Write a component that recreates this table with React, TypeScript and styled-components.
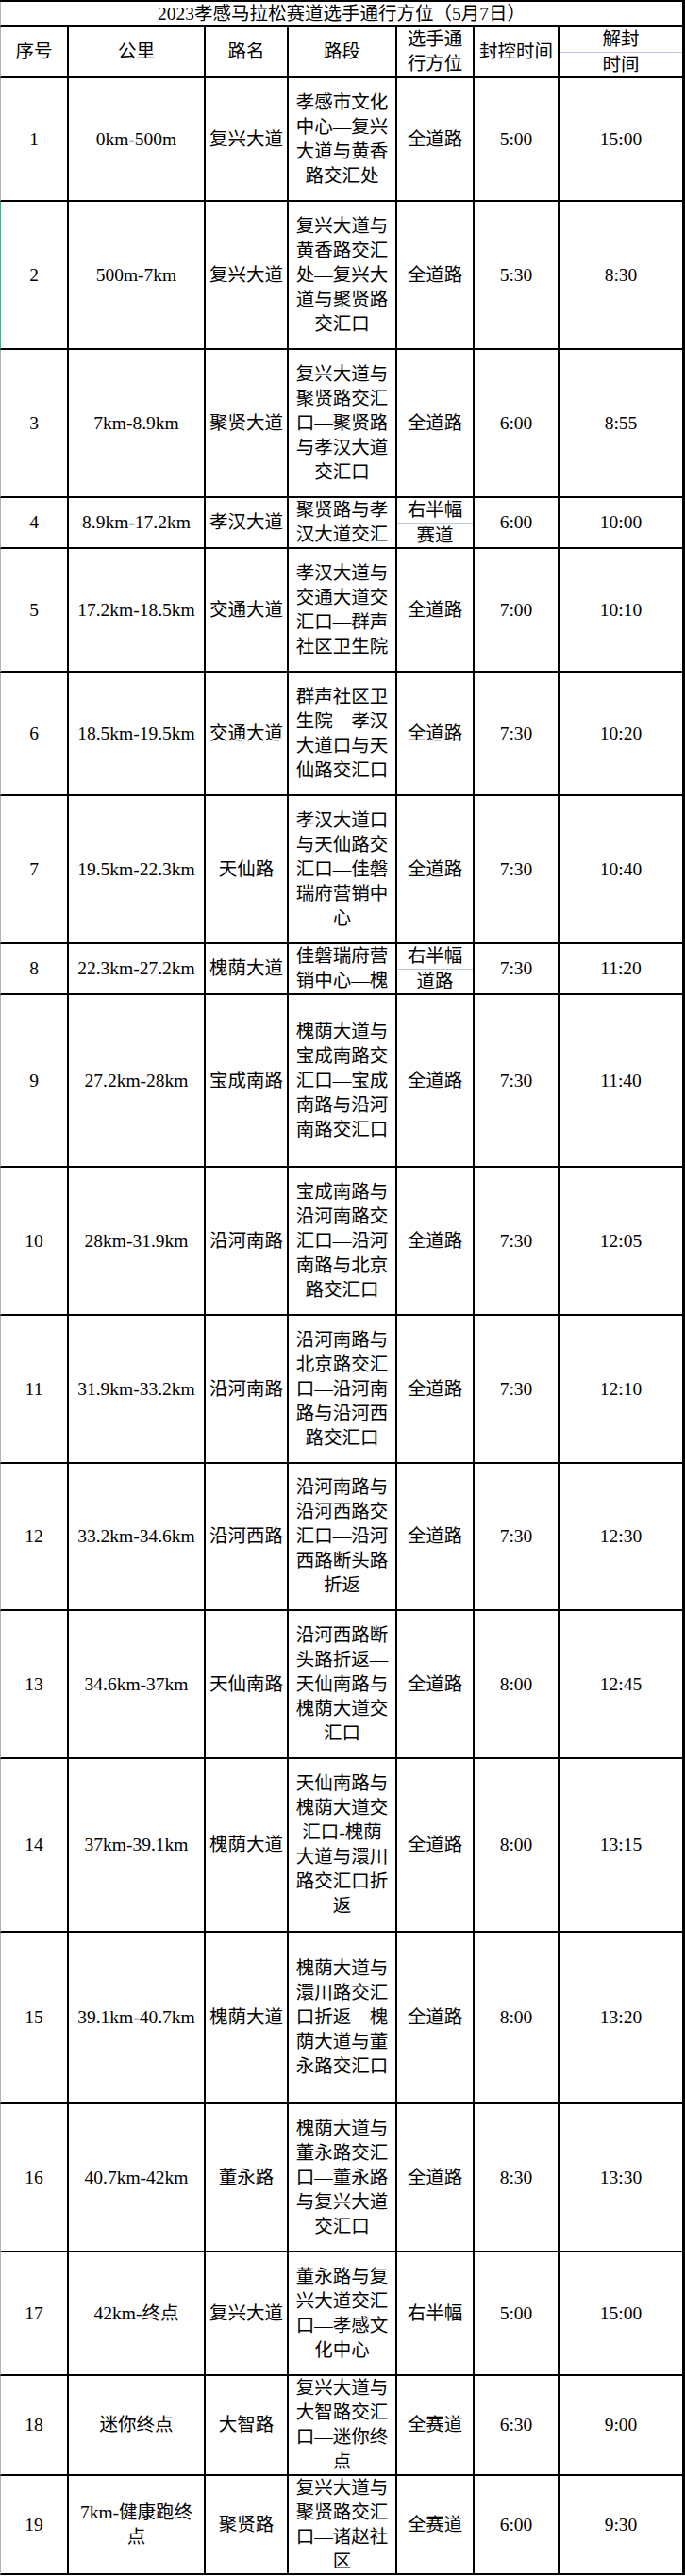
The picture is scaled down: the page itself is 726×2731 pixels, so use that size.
import React from "react";
import styled, { createGlobalStyle } from "styled-components";

type Text = string | string[];

interface IStage {
  no: number,
  km: Text,
  road: string,
  section: string[],
  lane: Text,
  close: string,
  open: string,
  height: number,
  split?: boolean,
  green?: boolean,
}

const stages: IStage[] = [
  { no: 1, km: "0km-500m", road: "复兴大道", section: ["孝感市文化", "中心—复兴", "大道与黄香", "路交汇处"], lane: "全道路", close: "5:00", open: "15:00", height: 131 },
  { no: 2, km: "500m-7km", road: "复兴大道", section: ["复兴大道与", "黄香路交汇", "处—复兴大", "道与聚贤路", "交汇口"], lane: "全道路", close: "5:30", open: "8:30", height: 157, green: true },
  { no: 3, km: "7km-8.9km", road: "聚贤大道", section: ["复兴大道与", "聚贤路交汇", "口—聚贤路", "与孝汉大道", "交汇口"], lane: "全道路", close: "6:00", open: "8:55", height: 157 },
  { no: 4, km: "8.9km-17.2km", road: "孝汉大道", section: ["聚贤路与孝", "汉大道交汇"], lane: ["右半幅", "赛道"], split: true, close: "6:00", open: "10:00", height: 54 },
  { no: 5, km: "17.2km-18.5km", road: "交通大道", section: ["孝汉大道与", "交通大道交", "汇口—群声", "社区卫生院"], lane: "全道路", close: "7:00", open: "10:10", height: 131 },
  { no: 6, km: "18.5km-19.5km", road: "交通大道", section: ["群声社区卫", "生院—孝汉", "大道口与天", "仙路交汇口"], lane: "全道路", close: "7:30", open: "10:20", height: 131 },
  { no: 7, km: "19.5km-22.3km", road: "天仙路", section: ["孝汉大道口", "与天仙路交", "汇口—佳磐", "瑞府营销中", "心"], lane: "全道路", close: "7:30", open: "10:40", height: 157 },
  { no: 8, km: "22.3km-27.2km", road: "槐荫大道", section: ["佳磐瑞府营", "销中心—槐"], lane: ["右半幅", "道路"], split: true, close: "7:30", open: "11:20", height: 54 },
  { no: 9, km: "27.2km-28km", road: "宝成南路", section: ["槐荫大道与", "宝成南路交", "汇口—宝成", "南路与沿河", "南路交汇口"], lane: "全道路", close: "7:30", open: "11:40", height: 183 },
  { no: 10, km: "28km-31.9km", road: "沿河南路", section: ["宝成南路与", "沿河南路交", "汇口—沿河", "南路与北京", "路交汇口"], lane: "全道路", close: "7:30", open: "12:05", height: 157 },
  { no: 11, km: "31.9km-33.2km", road: "沿河南路", section: ["沿河南路与", "北京路交汇", "口—沿河南", "路与沿河西", "路交汇口"], lane: "全道路", close: "7:30", open: "12:10", height: 157 },
  { no: 12, km: "33.2km-34.6km", road: "沿河西路", section: ["沿河南路与", "沿河西路交", "汇口—沿河", "西路断头路", "折返"], lane: "全道路", close: "7:30", open: "12:30", height: 156 },
  { no: 13, km: "34.6km-37km", road: "天仙南路", section: ["沿河西路断", "头路折返—", "天仙南路与", "槐荫大道交", "汇口"], lane: "全道路", close: "8:00", open: "12:45", height: 157 },
  { no: 14, km: "37km-39.1km", road: "槐荫大道", section: ["天仙南路与", "槐荫大道交", "汇口-槐荫", "大道与澴川", "路交汇口折", "返"], lane: "全道路", close: "8:00", open: "13:15", height: 184 },
  { no: 15, km: "39.1km-40.7km", road: "槐荫大道", section: ["槐荫大道与", "澴川路交汇", "口折返—槐", "荫大道与董", "永路交汇口"], lane: "全道路", close: "8:00", open: "13:20", height: 182 },
  { no: 16, km: "40.7km-42km", road: "董永路", section: ["槐荫大道与", "董永路交汇", "口—董永路", "与复兴大道", "交汇口"], lane: "全道路", close: "8:30", open: "13:30", height: 157 },
  { no: 17, km: "42km-终点", road: "复兴大道", section: ["董永路与复", "兴大道交汇", "口—孝感文", "化中心"], lane: "右半幅", close: "5:00", open: "15:00", height: 131 },
  { no: 18, km: "迷你终点", road: "大智路", section: ["复兴大道与", "大智路交汇", "口—迷你终", "点"], lane: "全赛道", close: "6:30", open: "9:00", height: 106 },
  { no: 19, km: ["7km-健康跑终", "点"], road: "聚贤路", section: ["复兴大道与", "聚贤路交汇", "口—诸赵社", "区"], lane: "全赛道", close: "6:00", open: "9:30", height: 105 },
];

const lines = (text: Text) =>
  (Array.isArray(text) ? text : [text]).map((line, i) => <Line key={i}>{line}</Line>);

const App: React.FC = () => {
  return (
    <>
      <GlobalStyle />
      <Sheet>
        <Title>2023孝感马拉松赛道选手通行方位（5月7日）</Title>
        <Row $h={54}>
          <Cell>{lines("序号")}</Cell>
          <Cell>{lines("公里")}</Cell>
          <Cell>{lines("路名")}</Cell>
          <Cell>{lines("路段")}</Cell>
          <Cell>{lines(["选手通", "行方位"])}</Cell>
          <Cell>{lines("封控时间")}</Cell>
          <Cell>
            <Half $divider>解封</Half>
            <Half>时间</Half>
          </Cell>
        </Row>
        {stages.map((s) => (
          <Row key={s.no} $h={s.height} $green={s.green}>
            <Cell>{lines(String(s.no))}</Cell>
            <Cell>{lines(s.km)}</Cell>
            <Cell>{lines(s.road)}</Cell>
            <Cell>{lines(s.section)}</Cell>
            {s.split && Array.isArray(s.lane) ? (
              <Cell>
                <Half $divider>{s.lane[0]}</Half>
                <Half>{s.lane[1]}</Half>
              </Cell>
            ) : (
              <Cell>{lines(s.lane)}</Cell>
            )}
            <Cell>{lines(s.close)}</Cell>
            <Cell>{lines(s.open)}</Cell>
          </Row>
        ))}
      </Sheet>
    </>
  );
};

export default App;

const GlobalStyle = createGlobalStyle`
  body {
    margin: 0;
    background: #fff;
    color: #000;
    font-family: "Liberation Serif", "Noto Sans CJK SC", serif;
    font-size: 19.5px;
  }
`

const Sheet = styled.div`
  width: 726px;
  border-top: 2px solid #000;
`

const Title = styled.div`
  box-sizing: border-box;
  height: 27px;
  line-height: 25px;
  text-align: center;
  white-space: nowrap;
  border-left: 1px solid #aab4c6;
  border-right: 3px solid #000;
  border-bottom: 2px solid #000;
`

const Row = styled.div<{ $h: number, $green?: boolean }>`
  display: grid;
  grid-template-columns: 73px 145px 88px 115px 82px 90px 133px;
  height: ${(p) => p.$h}px;

  & > div:first-child {
    border-left: 1px solid ${(p) => (p.$green ? "#22c07f" : "#aab4c6")};
  }
  & > div:last-child {
    border-right-width: 3px;
  }
`

const Cell = styled.div`
  box-sizing: border-box;
  display: flex;
  flex-direction: column;
  align-items: stretch;
  justify-content: center;
  min-width: 0;
  overflow: hidden;
  text-align: center;
  line-height: 26px;
  border-right: 2px solid #000;
  border-bottom: 2px solid #000;
`

const Line = styled.span`
  display: block;
  white-space: nowrap;
`

const Half = styled.div<{ $divider?: boolean }>`
  flex: 1;
  display: flex;
  align-items: center;
  justify-content: center;
  white-space: nowrap;
  border-bottom: ${(p) => (p.$divider ? "1px solid #bcc6d6" : "none")};
`
